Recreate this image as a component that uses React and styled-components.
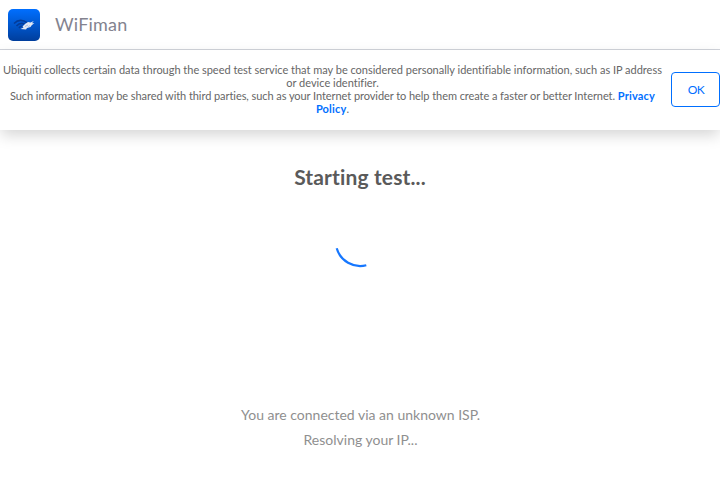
import React from "react";
import styled, { createGlobalStyle } from "styled-components";

const GlobalStyle = createGlobalStyle`
  * { box-sizing: border-box; }
  body {
    margin: 0;
    background: #fff;
    font-family: Lato, sans-serif;
    font-variant-ligatures: none;
    -webkit-font-smoothing: antialiased;
  }
`;
const Page = styled.div`
  display: flex;
  flex-direction: column;
  height: 480px;
`;
const Header = styled.header`
  display: flex;
  align-items: center;
  height: 50px;
  padding-left: 8px;
  gap: 15px;
  border-bottom: 1px solid #d0d3da;
`;
const Brand = styled.span`
  font-size: 18px;
  line-height: 24px;
  padding-bottom: 2px;
  letter-spacing: 0.2px;
  color: #83838f;
`;
const Notice = styled.section`
  display: flex;
  align-items: center;
  height: 80px;
  padding-bottom: 2px;
  box-shadow: 0 6px 14px -1px rgba(0, 0, 0, 0.17);
`;
const NoticeText = styled.div`
  flex: 1;
  margin-right: 6px;
  font-size: 11px;
  line-height: 13px;
  text-align: center;
  white-space: nowrap;
  color: #666;
`;
const Line = styled.div`
  letter-spacing: ${(p) => p.$tracking || 0}px;
`;
const Policy = styled.a`
  font-weight: 700;
  letter-spacing: 0.18px;
  color: #006fff;
`;
const OkButton = styled.button`
  width: 49px;
  height: 35px;
  padding: 1px 0 0 1px;
  border: 1px solid #006fff;
  border-radius: 4px;
  background: #fff;
  color: #006fff;
  font: 12px Lato, sans-serif;
  letter-spacing: -0.5px;
`;
const Main = styled.main`
  flex: 1;
  display: flex;
  flex-direction: column;
  align-items: center;
`;
const Title = styled.h1`
  margin: 34px 0 0;
  font-size: 21px;
  line-height: 26px;
  letter-spacing: 0.14px;
  color: #5a5a5a;
`;
const Spinner = styled.svg`
  margin-top: 24px;
`;
const Status = styled.div`
  margin-top: auto;
  padding: 0 0 28px 1px;
  font-size: 14px;
  line-height: 25px;
  text-align: center;
  color: #8f8f8f;
`;

function Logo() {
  return (
    <svg width="32" height="32" viewBox="0 0 32 32">
      <defs>
        <linearGradient id="tile" x1="0" y1="0" x2="0" y2="1">
          <stop offset="0" stopColor="#006fff" />
          <stop offset="1" stopColor="#003e9c" />
        </linearGradient>
      </defs>
      <rect width="32" height="32" rx="5" fill="url(#tile)" />
      <g fill="none" stroke="#033c99" strokeWidth="1.6">
        <path d="M6 14.500Q12 8.500 19.500 14" />
        <path d="M8.500 17Q12.500 12.500 17 15.500" />
        <path d="M11 19Q12.500 16.500 15 17.500" />
      </g>
      <path d="M12.500 20L15.500 18.500L14.500 17.500L17 15L20 13L22.500 13.500L25.800 12L24 14.300L26.300 14L23.500 16.500L22.500 18L19 19L18 20.500Z" fill="#e1e8f4" />
      <path d="M17 17.500L20 16M20.500 18L21.500 16.500" fill="none" stroke="#8fb1e5" strokeWidth="0.8" />
    </svg>
  );
}

export default function App() {
  return (
    <Page>
      <GlobalStyle />
      <Header>
        <Logo />
        <Brand>WiFiman</Brand>
      </Header>
      <Notice>
        <NoticeText>
          <Line $tracking={-0.018}>Ubiquiti collects certain data through the speed test service that may be considered personally identifiable information, such as IP address</Line>
          <Line>or device identifier.</Line>
          <Line $tracking={-0.065}>
            Such information may be shared with third parties, such as your Internet provider to help them create a faster or better Internet. <Policy>Privacy</Policy>
          </Line>
          <Line><Policy>Policy</Policy>.</Line>
        </NoticeText>
        <OkButton>OK</OkButton>
      </Notice>
      <Main>
        <Title>Starting test...</Title>
        <Spinner width="54" height="54" viewBox="0 0 54 54" fill="none">
          <path d="M3.700 34.300A24.500 24.500 0 0 0 33.300 51.300" stroke="#1677ff" strokeWidth="2.200" />
        </Spinner>
        <Status>
          You are connected via an unknown ISP.
          <br />
          Resolving your IP...
        </Status>
      </Main>
    </Page>
  );
}
